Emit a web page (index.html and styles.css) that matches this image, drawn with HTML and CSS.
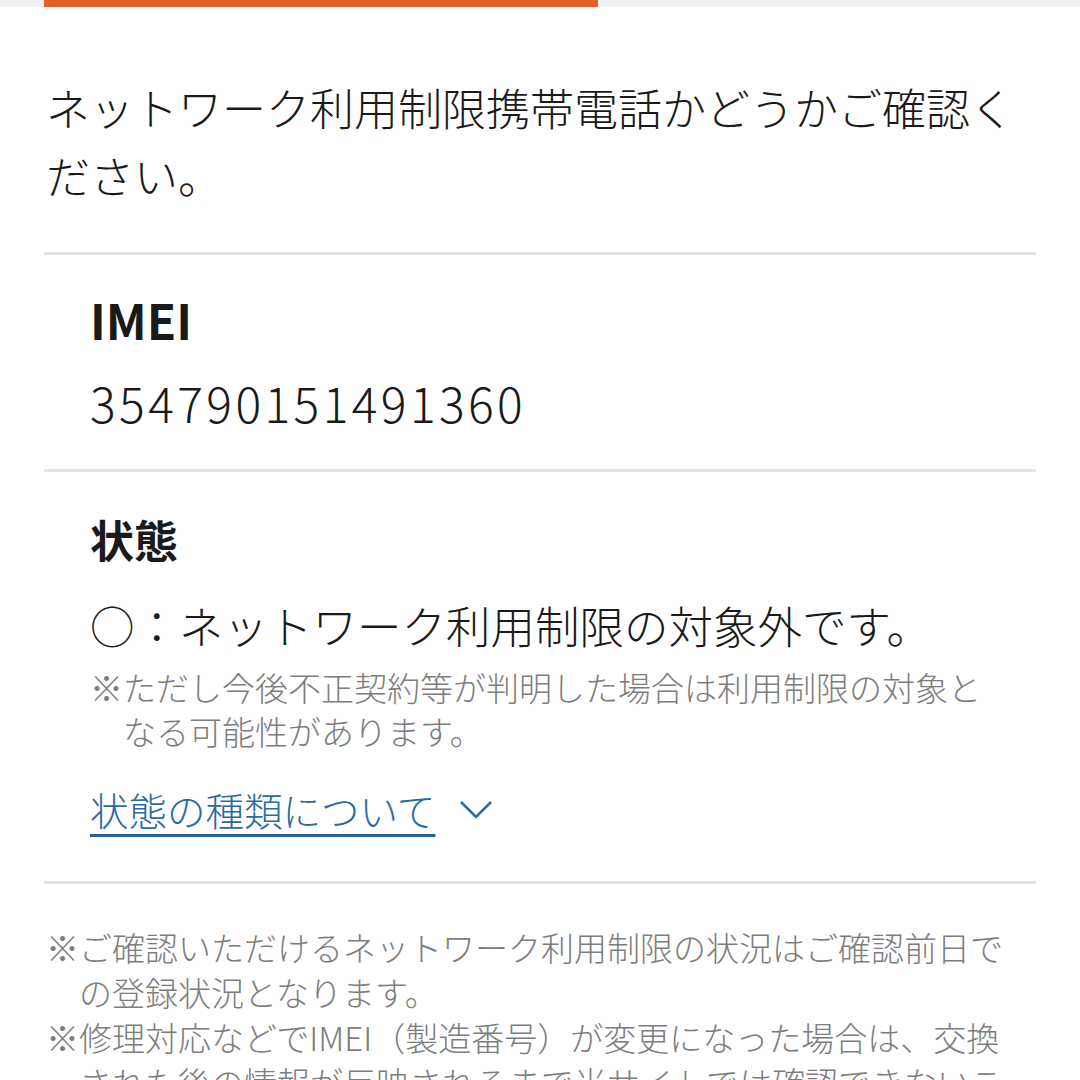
FILE: index.html
```html
<!DOCTYPE html>
<html lang="ja">
<head>
<meta charset="utf-8">
<link rel="stylesheet" href="styles.css">
</head>
<body>
<div class="progress"><div class="progress-bar"></div></div>
<main class="container">
  <p class="lead">ネットワーク利用制限携帯電話かどうかご確認ください。</p>
  <section class="item">
    <h2 class="item-title latin">IMEI</h2>
    <p class="imei">354790151491360</p>
  </section>
  <section class="item item-status">
    <h2 class="item-title">状態</h2>
    <p class="status">○：ネットワーク利用制限の対象外です。</p>
    <p class="note">※ただし今後不正契約等が判明した場合は利用制限の対象となる可能性があります。</p>
    <a class="toggle" href="#"><span class="toggle-text">状態の種類について</span><svg class="chevron" width="34" height="22" viewBox="0 0 34 22"><path d="M2 4 L17 19 L32 4" fill="none" stroke="#2a6aa3" stroke-width="2.6"/></svg></a>
  </section>
  <section class="notes">
    <p class="note-item">※ご確認いただけるネットワーク利用制限の状況はご確認前日での登録状況となります。</p>
    <p class="note-item">※修理対応などでIMEI（製造番号）が変更になった場合は、交換された後の情報が反映されるまで当サイトでは確認できないことがあります。</p>
  </section>
</main>
</body>
</html>
```

FILE: styles.css
```css
html, body {
  margin: 0;
  padding: 0;
  background: #ffffff;
}
body {
  font-family: "Noto Sans CJK JP", "Noto Sans", sans-serif;
  font-weight: 300;
  color: #1a1a1a;
  overflow: hidden;
  height: 1080px;
}
.progress {
  height: 7px;
  background: #f0f0f0;
}
.progress-bar {
  margin-left: 44px;
  width: 554px;
  height: 7px;
  background: #e4602a;
}
.container {
  padding: 0 44px;
}
.lead {
  margin: 0;
  padding: 66px 2px 43px 2px;
  font-size: 44px;
  line-height: 68px;
}
.item {
  border-top: 3px solid #e4e4e4;
  padding: 32px 0 35px 46px;
}
.item-title {
  margin: 0;
  font-size: 44px;
  line-height: 64px;
  font-weight: 700;
}
.item-title.latin {
  font-size: 48px;
}
.imei {
  margin: 19px 0 0 0;
  font-size: 48px;
  line-height: 64px;
  letter-spacing: 3.4px;
}
.item-status {
  padding-top: 35px;
  padding-bottom: 44px;
}
.status {
  margin: 22px 0 0 0;
  font-size: 44.5px;
  line-height: 64px;
}
.note {
  margin: 8px 0 0 0;
  font-size: 33px;
  line-height: 44px;
  color: #7d7d7d;
  padding-left: 33px;
  text-indent: -33px;
  padding-right: 40px;
}
.toggle {
  margin-top: 28px;
  display: flex;
  align-items: center;
  gap: 24px;
  color: #2a6aa3;
  text-decoration: none;
  font-size: 38.5px;
  line-height: 56px;
}
.toggle-text {
  text-decoration: underline;
  text-decoration-thickness: 3px;
  text-decoration-color: #2a6090;
  text-underline-offset: 8px;
}
.chevron {
  display: block;
}
.notes {
  border-top: 3px solid #e4e4e4;
  padding-top: 41px;
}
.note-item {
  margin: 0;
  font-size: 33px;
  line-height: 45px;
  color: #7d7d7d;
  padding-left: 35px;
  text-indent: -33px;
  padding-right: 4px;
}
```
